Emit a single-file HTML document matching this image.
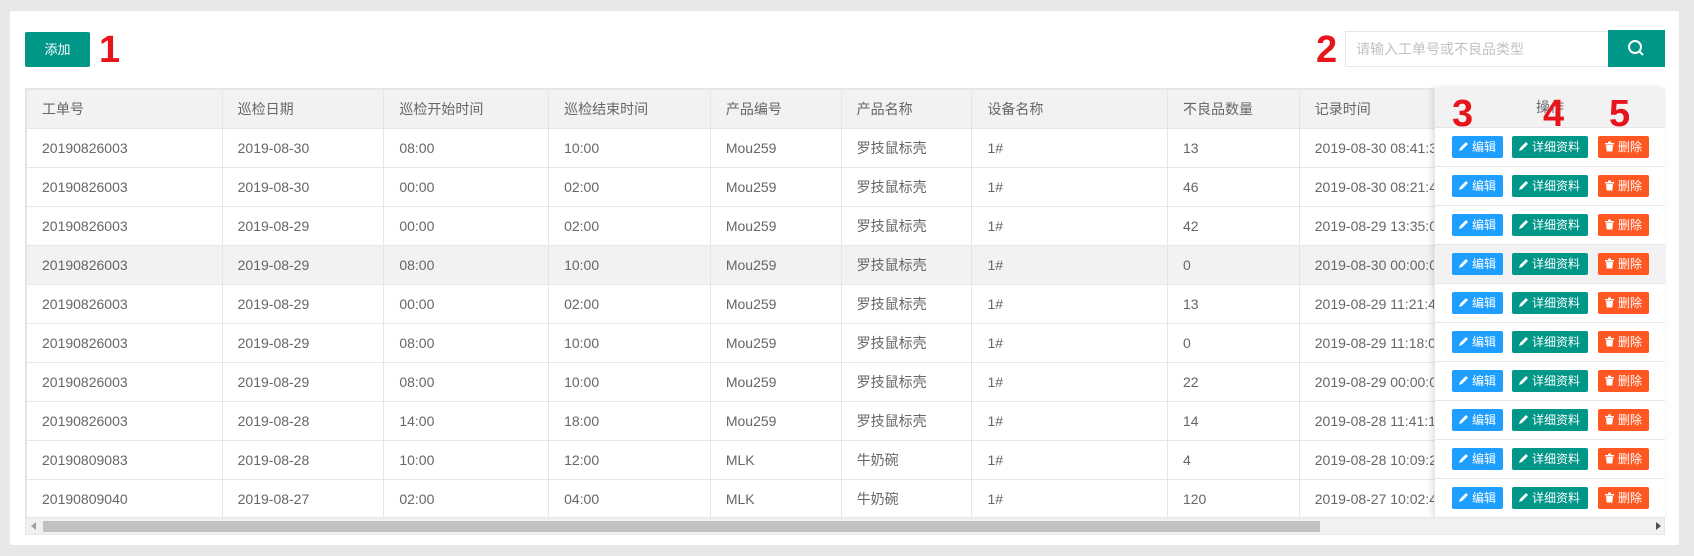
<!DOCTYPE html>
<html><head><meta charset="utf-8"><style>
*{box-sizing:border-box;margin:0;padding:0}
body{width:1694px;height:556px;background:#e8e8e8;font-family:"Liberation Sans","Noto Sans CJK SC",sans-serif;position:relative;overflow:hidden;color:#666}
.card{position:absolute;left:10px;top:11px;width:1669px;height:534px;background:#fff;border-radius:2px}
.add{position:absolute;left:25px;top:32px;width:65px;height:35px;background:#009688;color:#fff;font-size:13px;line-height:35px;text-align:center;border-radius:2px}
.red{position:absolute;color:#e8141c;font-weight:bold;font-size:38px;line-height:1;font-family:"Liberation Sans",sans-serif}
.inp{position:absolute;left:1345px;top:31px;width:264px;height:36px;border:1px solid #e6e6e6;font-size:14px;color:#c2c2c2;line-height:34px;padding-left:10px}
.sbtn{position:absolute;left:1608px;top:30px;width:57px;height:37px;background:#009688}
.tbl{position:absolute;left:25px;top:88px;width:1640px;height:447px;border:1px solid #e6e6e6;overflow:hidden}
table{border-collapse:collapse;table-layout:fixed;font-size:14px}
td,th{height:39px;border:1px solid #e6e6e6;padding-left:15px;text-align:left;font-weight:normal;white-space:nowrap;overflow:hidden;color:#666}
th{background:#f2f2f2}
tr.h td{background:#f2f2f2}
.fix{position:absolute;left:1434px;top:88px;width:231px;height:429px;background:#fff;box-shadow:-2px 0 6px rgba(0,0,0,.12);border-left:1px solid #e6e6e6}
.fix div.r{height:39px;border-bottom:1px solid #e6e6e6;position:relative}
.fix div.hd{background:#f2f2f2;height:39.5px;text-align:center;line-height:39px;font-size:14px}
.b{position:absolute;top:8px;height:22px;line-height:22px;color:#fff;font-size:12px;border-radius:2px;padding-left:20px}
.b svg{position:absolute;left:6px;top:5px}
.e{left:17px;width:51px;background:#1e9fff}
.d{left:77px;width:76px;background:#009688}
.x{left:163px;width:51px;background:#ff5722}
.sb{position:absolute;left:26px;top:517px;width:1638px;height:17px;background:#f1f1f1;border-top:1px solid #e6e6e6}
.th{position:absolute;left:17px;top:3px;width:1277px;height:11px;background:#c1c1c1}
</style></head><body>
<div class="card"></div>
<div class="add">添加</div>
<div class="red" style="left:99px;top:31px">1</div>
<div class="red" style="left:1316px;top:31px">2</div>
<div class="inp">请输入工单号或不良品类型</div>
<div class="sbtn"><svg width="57" height="37"><circle cx="27" cy="17" r="6" fill="none" stroke="#fff" stroke-width="2"/><line x1="31" y1="21" x2="35" y2="25" stroke="#fff" stroke-width="2"/></svg></div>
<div class="tbl"><table>
<colgroup><col style="width:196px"><col style="width:162px"><col style="width:165px"><col style="width:162px"><col style="width:131px"><col style="width:131px"><col style="width:196px"><col style="width:132px"><col style="width:365px"></colgroup>
<tr><th>工单号</th><th>巡检日期</th><th>巡检开始时间</th><th>巡检结束时间</th><th>产品编号</th><th>产品名称</th><th>设备名称</th><th>不良品数量</th><th>记录时间</th></tr>
<tr><td>20190826003</td><td>2019-08-30</td><td>08:00</td><td>10:00</td><td>Mou259</td><td>罗技鼠标壳</td><td>1#</td><td>13</td><td>2019-08-30 08:41:30</td></tr>
<tr><td>20190826003</td><td>2019-08-30</td><td>00:00</td><td>02:00</td><td>Mou259</td><td>罗技鼠标壳</td><td>1#</td><td>46</td><td>2019-08-30 08:21:40</td></tr>
<tr><td>20190826003</td><td>2019-08-29</td><td>00:00</td><td>02:00</td><td>Mou259</td><td>罗技鼠标壳</td><td>1#</td><td>42</td><td>2019-08-29 13:35:00</td></tr>
<tr class="h"><td>20190826003</td><td>2019-08-29</td><td>08:00</td><td>10:00</td><td>Mou259</td><td>罗技鼠标壳</td><td>1#</td><td>0</td><td>2019-08-30 00:00:00</td></tr>
<tr><td>20190826003</td><td>2019-08-29</td><td>00:00</td><td>02:00</td><td>Mou259</td><td>罗技鼠标壳</td><td>1#</td><td>13</td><td>2019-08-29 11:21:40</td></tr>
<tr><td>20190826003</td><td>2019-08-29</td><td>08:00</td><td>10:00</td><td>Mou259</td><td>罗技鼠标壳</td><td>1#</td><td>0</td><td>2019-08-29 11:18:00</td></tr>
<tr><td>20190826003</td><td>2019-08-29</td><td>08:00</td><td>10:00</td><td>Mou259</td><td>罗技鼠标壳</td><td>1#</td><td>22</td><td>2019-08-29 00:00:00</td></tr>
<tr><td>20190826003</td><td>2019-08-28</td><td>14:00</td><td>18:00</td><td>Mou259</td><td>罗技鼠标壳</td><td>1#</td><td>14</td><td>2019-08-28 11:41:10</td></tr>
<tr><td>20190809083</td><td>2019-08-28</td><td>10:00</td><td>12:00</td><td>MLK</td><td>牛奶碗</td><td>1#</td><td>4</td><td>2019-08-28 10:09:20</td></tr>
<tr><td>20190809040</td><td>2019-08-27</td><td>02:00</td><td>04:00</td><td>MLK</td><td>牛奶碗</td><td>1#</td><td>120</td><td>2019-08-27 10:02:40</td></tr>
</table></div>
<div class="fix">
<div class="r hd">操作</div>
<div class="r"><span class="b e"><svg width="11" height="11"><path d="M1 10 L2 7 L8 1 L10 3 L4 9 Z" fill="#fff"/></svg>编辑</span><span class="b d"><svg width="11" height="11"><path d="M1 10 L2 7 L8 1 L10 3 L4 9 Z" fill="#fff"/></svg>详细资料</span><span class="b x"><svg width="11" height="11"><path d="M1 2H10V3.5H1Z M4 0.5H7V2H4Z M2 4H9L8.3 10.5H2.7Z" fill="#fff"/></svg>删除</span></div>
<div class="r"><span class="b e"><svg width="11" height="11"><path d="M1 10 L2 7 L8 1 L10 3 L4 9 Z" fill="#fff"/></svg>编辑</span><span class="b d"><svg width="11" height="11"><path d="M1 10 L2 7 L8 1 L10 3 L4 9 Z" fill="#fff"/></svg>详细资料</span><span class="b x"><svg width="11" height="11"><path d="M1 2H10V3.5H1Z M4 0.5H7V2H4Z M2 4H9L8.3 10.5H2.7Z" fill="#fff"/></svg>删除</span></div>
<div class="r"><span class="b e"><svg width="11" height="11"><path d="M1 10 L2 7 L8 1 L10 3 L4 9 Z" fill="#fff"/></svg>编辑</span><span class="b d"><svg width="11" height="11"><path d="M1 10 L2 7 L8 1 L10 3 L4 9 Z" fill="#fff"/></svg>详细资料</span><span class="b x"><svg width="11" height="11"><path d="M1 2H10V3.5H1Z M4 0.5H7V2H4Z M2 4H9L8.3 10.5H2.7Z" fill="#fff"/></svg>删除</span></div>
<div class="r" style="background:#f2f2f2"><span class="b e"><svg width="11" height="11"><path d="M1 10 L2 7 L8 1 L10 3 L4 9 Z" fill="#fff"/></svg>编辑</span><span class="b d"><svg width="11" height="11"><path d="M1 10 L2 7 L8 1 L10 3 L4 9 Z" fill="#fff"/></svg>详细资料</span><span class="b x"><svg width="11" height="11"><path d="M1 2H10V3.5H1Z M4 0.5H7V2H4Z M2 4H9L8.3 10.5H2.7Z" fill="#fff"/></svg>删除</span></div>
<div class="r"><span class="b e"><svg width="11" height="11"><path d="M1 10 L2 7 L8 1 L10 3 L4 9 Z" fill="#fff"/></svg>编辑</span><span class="b d"><svg width="11" height="11"><path d="M1 10 L2 7 L8 1 L10 3 L4 9 Z" fill="#fff"/></svg>详细资料</span><span class="b x"><svg width="11" height="11"><path d="M1 2H10V3.5H1Z M4 0.5H7V2H4Z M2 4H9L8.3 10.5H2.7Z" fill="#fff"/></svg>删除</span></div>
<div class="r"><span class="b e"><svg width="11" height="11"><path d="M1 10 L2 7 L8 1 L10 3 L4 9 Z" fill="#fff"/></svg>编辑</span><span class="b d"><svg width="11" height="11"><path d="M1 10 L2 7 L8 1 L10 3 L4 9 Z" fill="#fff"/></svg>详细资料</span><span class="b x"><svg width="11" height="11"><path d="M1 2H10V3.5H1Z M4 0.5H7V2H4Z M2 4H9L8.3 10.5H2.7Z" fill="#fff"/></svg>删除</span></div>
<div class="r"><span class="b e"><svg width="11" height="11"><path d="M1 10 L2 7 L8 1 L10 3 L4 9 Z" fill="#fff"/></svg>编辑</span><span class="b d"><svg width="11" height="11"><path d="M1 10 L2 7 L8 1 L10 3 L4 9 Z" fill="#fff"/></svg>详细资料</span><span class="b x"><svg width="11" height="11"><path d="M1 2H10V3.5H1Z M4 0.5H7V2H4Z M2 4H9L8.3 10.5H2.7Z" fill="#fff"/></svg>删除</span></div>
<div class="r"><span class="b e"><svg width="11" height="11"><path d="M1 10 L2 7 L8 1 L10 3 L4 9 Z" fill="#fff"/></svg>编辑</span><span class="b d"><svg width="11" height="11"><path d="M1 10 L2 7 L8 1 L10 3 L4 9 Z" fill="#fff"/></svg>详细资料</span><span class="b x"><svg width="11" height="11"><path d="M1 2H10V3.5H1Z M4 0.5H7V2H4Z M2 4H9L8.3 10.5H2.7Z" fill="#fff"/></svg>删除</span></div>
<div class="r"><span class="b e"><svg width="11" height="11"><path d="M1 10 L2 7 L8 1 L10 3 L4 9 Z" fill="#fff"/></svg>编辑</span><span class="b d"><svg width="11" height="11"><path d="M1 10 L2 7 L8 1 L10 3 L4 9 Z" fill="#fff"/></svg>详细资料</span><span class="b x"><svg width="11" height="11"><path d="M1 2H10V3.5H1Z M4 0.5H7V2H4Z M2 4H9L8.3 10.5H2.7Z" fill="#fff"/></svg>删除</span></div>
<div class="r"><span class="b e"><svg width="11" height="11"><path d="M1 10 L2 7 L8 1 L10 3 L4 9 Z" fill="#fff"/></svg>编辑</span><span class="b d"><svg width="11" height="11"><path d="M1 10 L2 7 L8 1 L10 3 L4 9 Z" fill="#fff"/></svg>详细资料</span><span class="b x"><svg width="11" height="11"><path d="M1 2H10V3.5H1Z M4 0.5H7V2H4Z M2 4H9L8.3 10.5H2.7Z" fill="#fff"/></svg>删除</span></div>
</div>
<div class="red" style="left:1452px;top:95px">3</div>
<div class="red" style="left:1543px;top:95px">4</div>
<div class="red" style="left:1609px;top:95px">5</div>
<div class="sb"><svg style="position:absolute;left:5px;top:4px" width="6" height="8"><path d="M5 0V8L0 4Z" fill="#a0a0a0"/></svg><div class="th"></div><svg style="position:absolute;left:1630px;top:4px" width="6" height="8"><path d="M0 0V8L5 4Z" fill="#505050"/></svg></div>
</body></html>
